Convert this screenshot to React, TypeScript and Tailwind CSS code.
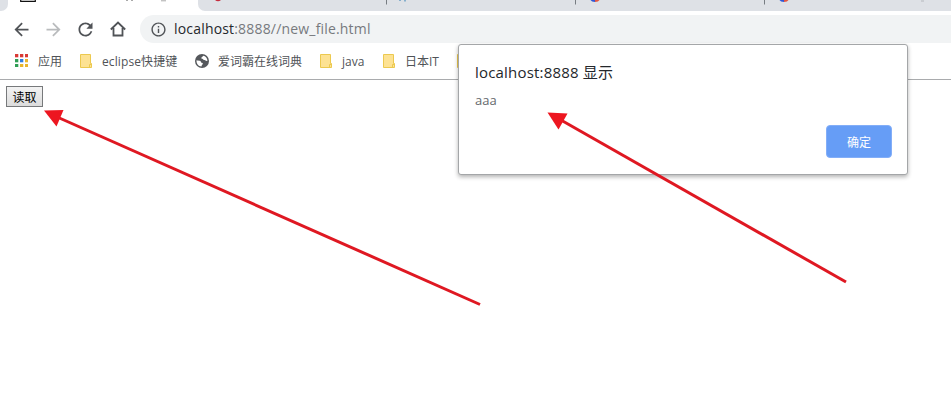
import type { ReactNode } from "react";

const uiFont = "font-['Open_Sans','Noto_Sans_CJK_SC',sans-serif]";

function Icon({ d, className }: { d: string; className: string }) {
  return (
    <svg viewBox="0 0 24 24" fill="currentColor" className={`shrink-0 ${className}`}>
      <path d={d} />
    </svg>
  );
}

function Folder() {
  return (
    <svg viewBox="0 0 12 14" className="h-[14px] w-[12px] shrink-0">
      <path d="M.5.5h10v9h1v4H.5z" fill="#fde293" stroke="#ecc94f" />
      <path d="M9.5 13.5v-3h2" fill="none" stroke="#ecc94f" />
    </svg>
  );
}

function Globe() {
  return (
    <svg viewBox="0 0 14 14" className="h-[14px] w-[14px] shrink-0">
      <circle cx="7" cy="7" r="7" fill="#55585c" />
      <path
        d="M1.500 6.200C2.300 6.800 3.800 6.300 5 6.800C6.300 7.300 5.400 8.600 6.800 8.800C8 9 8.200 9.800 7.400 10.500C6.800 11 6.600 12 6.500 12.500C3.600 12.300 1.300 9.800 1.500 6.200Z"
        fill="#fff"
      />
      <path
        d="M8.600 1.800C7.600 2 7.700 2.900 6.800 3.200C5.800 3.600 6.200 4.700 7.200 4.700C8.400 4.700 8.200 6.100 9.500 6.100C10.600 6.100 10.700 7.300 12.400 6.900C12.500 4.600 11 2.500 8.600 1.800Z"
        fill="#fff"
      />
    </svg>
  );
}

const dots = ["#d93a35", "#d93a35", "#d93a35", "#2f9e55", "#2f7de0", "#e9b52c", "#2f9e55", "#e9b52c", "#e9b52c"];

function Apps() {
  return (
    <svg viewBox="0 0 13 13" className="mb-[1px] h-[13px] w-[13px] shrink-0">
      {dots.map((c, i) => (
        <rect key={i} x={(i % 3) * 5} y={Math.floor(i / 3) * 5} width="3.3" height="3.3" fill={c} />
      ))}
    </svg>
  );
}

function Bookmark({ icon, label, width, gap = "gap-[10px]" }: { icon: ReactNode; label: string; width: string; gap?: string }) {
  return (
    <div className={`flex shrink-0 items-center ${gap}`}>
      {icon}
      <span className={`pt-[2px] whitespace-nowrap ${width}`}>{label}</span>
    </div>
  );
}

function TabStrip() {
  return (
    <div className="flex h-[11px] bg-white">
      <div className="w-2 rounded-br-[7px] bg-[#dee1e6]" />
      <svg viewBox="0 0 190 11" className="h-[11px] w-[190px]">
        <path d="M12.7 0v1.3h14.6V0" fill="none" stroke="#111" strokeWidth="1.2" />
        <path d="M119 0v1M124 0v1" stroke="#555" />
        <path d="M153 .8h5" stroke="#aaa" />
      </svg>
      <div className="flex-1 rounded-bl-[7px] bg-[#dee1e6]">
        <svg viewBox="0 0 753 11" className="h-[11px] w-[753px]">
          <path d="M17 0h6q-3 2.500-6 0" fill="#c52b3d" />
          <path d="M188.500 0v4.500M377.500 0v4.500M566.500 0v4.500" stroke="#777c82" />
          <path d="M202 0v1M207 0v1.500" stroke="#6a9fc4" strokeWidth="1.500" />
          <path d="M392.500 0h4.500v2q-3.500 0-4.500-2" fill="#3157d5" />
          <path d="M397 0h4.500q-1 2-4.500 2" fill="#e25743" />
          <path d="M581.500 0h4.500v2q-3.500 0-4.500-2" fill="#3157d5" />
          <path d="M586 0h4.500q-1 2-4.500 2" fill="#e25743" />
          <path d="M723 1h3" stroke="#b5b8bd" />
        </svg>
      </div>
    </div>
  );
}

function Toolbar() {
  return (
    <div className="flex h-8 items-center pt-1 pl-[11px] text-[#505357]">
      <Icon className="h-[21px] w-[21px]" d="M20 11H7.830l5.590-5.590L12 4l-8 8 8 8 1.410-1.410L7.830 13H20v-2z" />
      <Icon className="ml-[11px] h-[21px] w-[21px] text-[#b9bbbd]" d="M12 4l-1.410 1.410L16.170 11H4v2h12.170l-5.580 5.590L12 20l8-8z" />
      <Icon
        className="ml-[11px] h-[21px] w-[21px]"
        d="M17.650 6.350C16.200 4.900 14.210 4 12 4c-4.420 0-7.990 3.580-7.990 8s3.570 8 7.990 8c3.730 0 6.840-2.550 7.730-6h-2.080c-.820 2.330-3.040 4-5.650 4-3.310 0-6-2.690-6-6s2.690-6 6-6c1.660 0 3.140.690 4.220 1.780L13 11h7V4l-2.350 2.350z"
      />
      <svg viewBox="0 0 16 16" className="ml-[14px] h-4 w-4 shrink-0" fill="none" stroke="currentColor" strokeWidth="1.800">
        <path d="M.8 8.500L8 1.600l7.200 6.900M3.500 7v7.500h9V7" />
      </svg>
      <div className="ml-[14px] flex h-7 flex-1 items-center rounded-l-full bg-[#f1f3f4] pl-[9.500px]">
        <Icon
          className="h-[17px] w-[17px]"
          d="M11 7h2v2h-2zm0 4h2v6h-2zm1-9C6.480 2 2 6.480 2 12s4.480 10 10 10 10-4.480 10-10S17.520 2 12 2zm0 18c-4.410 0-8-3.590-8-8s3.590-8 8-8 8 3.590 8 8-3.590 8-8 8z"
        />
        <span className="ml-[7.500px] text-[14px] leading-5 tracking-[0.18px] whitespace-nowrap text-[#777a7e]">
          <span className="text-[#25282c]">localhost</span>:8888//new_file.html
        </span>
      </div>
    </div>
  );
}

function BookmarksBar() {
  return (
    <div className="flex h-[37px] items-center gap-[18px] overflow-hidden border-b border-[#a9abad] pl-[15px] text-[12px] text-[#505357]">
      <Bookmark icon={<Apps />} label="应用" width="w-6" />
      <Bookmark icon={<Folder />} label="eclipse快捷键" width="w-[75px] tracking-[0.1px]" />
      <Bookmark icon={<Globe />} label="爱词霸在线词典" width="w-[84px]" gap="gap-[9px]" />
      <Bookmark icon={<Folder />} label="java" width="w-[23px]" />
      <Bookmark icon={<Folder />} label="日本IT" width="w-[34px]" />
      <Folder />
    </div>
  );
}

function Dialog() {
  return (
    <div className="absolute top-[44px] left-[458px] flex h-[131px] w-[450px] flex-col rounded-[3px] border border-[#a4a6a8] bg-white px-4 pt-[16px] shadow-[0_2px_4px_rgba(0,0,0,0.3)]">
      <div className="text-[15px] leading-[22px] tracking-[0.19px] text-[#24272b]">localhost:8888 显示</div>
      <div className="mt-[7px] text-[13px] leading-5 text-[#65686c]">aaa</div>
      <button className="mt-[15px] mr-[-1px] flex h-[33px] w-[66px] items-center justify-center self-end rounded-[4px] border border-[#83aef8] bg-[#669df6] pt-[2px] text-[12px] text-white">
        确定
      </button>
    </div>
  );
}

function Arrows() {
  return (
    <svg viewBox="0 0 951 420" className="pointer-events-none absolute inset-0 h-[420px] w-[951px]">
      <g stroke="#df1822" strokeWidth="3" fill="none">
        <path d="M56 116.500L480 304.500" />
        <path d="M560 119.500L846 282" />
      </g>
      <path d="M44 110.500L63.500 110L56.500 126.500Z" fill="#ed1620" />
      <path d="M547.500 112.500L567.500 113.500L558.500 129.500Z" fill="#ed1620" />
    </svg>
  );
}

export default function App() {
  return (
    <div className={`relative h-[420px] w-[951px] overflow-hidden bg-white ${uiFont}`}>
      <TabStrip />
      <Toolbar />
      <BookmarksBar />
      <main className="pt-[6px] pl-[6px]">
        <button className="flex h-[21px] w-[37px] items-center justify-center border border-[#77797b] bg-gradient-to-b from-[#f3f3f3] to-[#dcdcdc] pt-[2px] text-[12px] text-black">
          读取
        </button>
      </main>
      <Dialog />
      <Arrows />
    </div>
  );
}
